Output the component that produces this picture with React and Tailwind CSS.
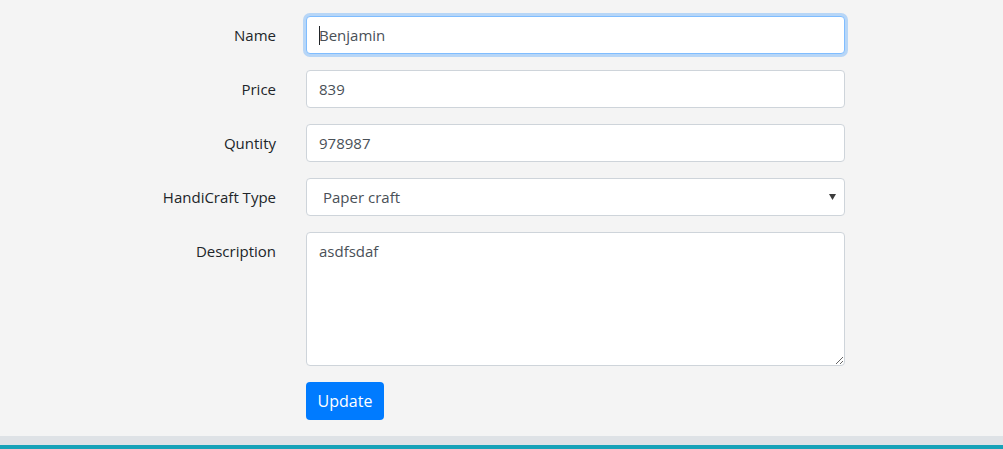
import React from "react";

const field =
  "w-full h-[38px] px-3 py-[6px] text-[15px] leading-6 text-[#495057] bg-white border border-[#ced4da] rounded-[4px] outline-none";

export default function App() {
  return (
    <div className="bg-[#f4f4f4] font-['Open_Sans','Liberation_Sans',sans-serif] text-[#212529] text-[15px]">
      <div className="pt-4 pb-4">
        <div className="grid grid-cols-[276px_539px] gap-x-[30px] gap-y-4">
          {/* NAME */}
          <label className="text-right pt-[7px] leading-6">Name</label>
          <div className="relative h-[38px] px-3 py-[6px] leading-6 text-[#495057] bg-white border border-[#80bdff] rounded-[4px] shadow-[0_0_0_3px_rgba(0,123,255,0.25)]">
            <span className="absolute left-[12px] top-[9px] w-px h-[19px] bg-[#212529]" />
            Benjamin
          </div>

          {/* PRICE */}
          <label className="text-right pt-[7px] leading-6">Price</label>
          <input className={field} readOnly defaultValue="839" />

          {/* QUANTITY */}
          <label className="text-right pt-[7px] leading-6">Quntity</label>
          <input className={field} readOnly defaultValue="978987" />

          {/* TYPE */}
          <label className="text-right pt-[7px] leading-6">HandiCraft Type</label>
          <div className="relative">
            <select
              className={field + " appearance-none pl-4"}
              defaultValue="paper"
            >
              <option value="paper">Paper craft</option>
              <option value="wood">Wood craft</option>
            </select>
            <svg
              className="absolute right-[9px] top-[16px]"
              width="7"
              height="6"
              viewBox="0 0 7 6"
            >
              <path d="M0 0h7L3.5 6z" fill="#3c3c3c" />
            </svg>
          </div>

          {/* DESCRIPTION */}
          <label className="text-right pt-[7px] leading-6">Description</label>
          <textarea
            rows={5}
            readOnly
            defaultValue="asdfsdaf"
            className="block w-full h-[134px] px-3 py-[6px] text-[15px] leading-6 text-[#495057] bg-white border border-[#ced4da] rounded-[4px] outline-none"
          />

          <div />
          <div>
            <button className="h-[38px] w-[78px] bg-[#007bff] text-white text-base leading-6 rounded-[4px]">
              Update
            </button>
          </div>
        </div>
      </div>
      <div className="h-[9px] bg-[#dee2e6]" />
      <div className="h-[4px] bg-[#17a2b8]" />
    </div>
  );
}
